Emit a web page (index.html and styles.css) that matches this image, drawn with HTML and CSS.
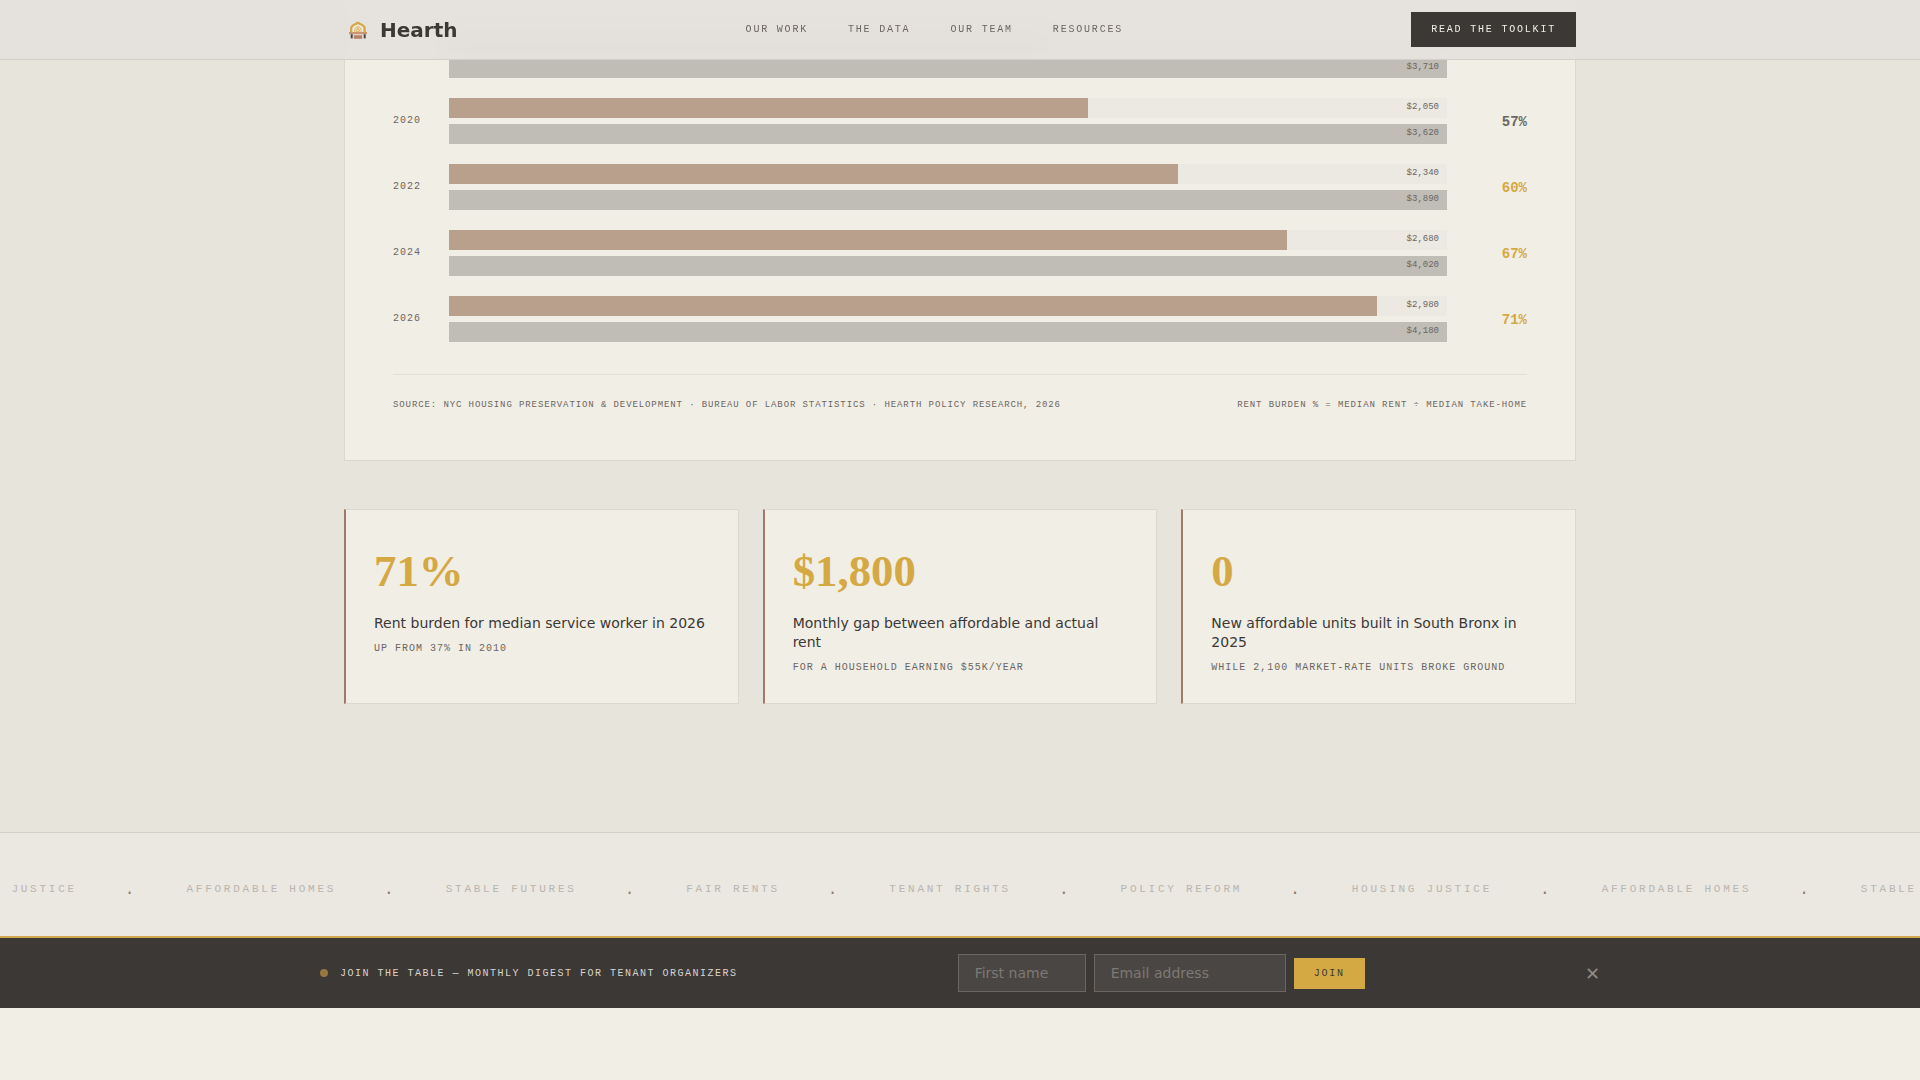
FILE: index.html
```html
<!DOCTYPE html>
<html lang="en">
<head>
<meta charset="utf-8">
<title>Hearth</title>
<link rel="stylesheet" href="styles.css">
</head>
<body>
<header class="site-header">
  <div class="header-inner">
    <a class="brand">
      <svg class="brand-mark" viewBox="0 0 28 28" width="28" height="28">
        <path d="M7.200 16.500v-5l1.300-1.700L13.900 6.700l5.400 3.100 1.300 1.700v5" fill="none" stroke="#d3a64a" stroke-width="2.200" stroke-linejoin="round"/>
        <path d="M8.800 16.200v-3.800q1-3.300 5.100-3.700 4.100.4 5.100 3.700v3.800z" fill="#f3ead6"/>
        <path d="M10.700 16.200v-2.700q.6-2.500 3.200-3 2.600.5 3.200 3v2.700" fill="none" stroke="#d9b566" stroke-width="1"/>
        <path d="M13.900 11.900q1.800 1.700 1.600 2.900-.4 1.400-1.600 1.400t-1.600-1.400q-.2-1.200 1.600-2.900z" fill="#ecd29a" stroke="#cf9f4c" stroke-width=".8"/>
        <rect x="5" y="16" width="18" height="2.200" fill="#c9946f"/>
        <rect x="6.700" y="18.200" width="2" height="4.200" fill="#4a4541"/>
        <rect x="19.700" y="18.200" width="2" height="4.200" fill="#4a4541"/>
        <rect x="9.800" y="19.200" width="8.400" height="3.600" fill="#b9826b"/>
      </svg>
      <span class="brand-name">Hearth</span>
    </a>
    <nav class="nav">
      <a>OUR WORK</a><a>THE DATA</a><a>OUR TEAM</a><a>RESOURCES</a>
    </nav>
    <a class="toolkit">READ THE TOOLKIT</a>
  </div>
</header>

<main class="data-section">
  <section class="chart-card">
    <div class="chart">
      <div class="chart-row">
        <span class="year"></span>
        <div class="bars">
          <div class="track"><div class="fill rent" style="width:60%"></div></div>
          <div class="track"><div class="fill income" style="width:100%"></div><span class="amount">$3,710</span></div>
        </div>
        <span class="burden"></span>
      </div>
      <div class="chart-row">
        <span class="year">2020</span>
        <div class="bars">
          <div class="track"><div class="fill rent" style="width:64%"></div><span class="amount">$2,050</span></div>
          <div class="track"><div class="fill income" style="width:100%"></div><span class="amount">$3,620</span></div>
        </div>
        <span class="burden">57%</span>
      </div>
      <div class="chart-row">
        <span class="year">2022</span>
        <div class="bars">
          <div class="track"><div class="fill rent" style="width:73%"></div><span class="amount">$2,340</span></div>
          <div class="track"><div class="fill income" style="width:100%"></div><span class="amount">$3,890</span></div>
        </div>
        <span class="burden high">60%</span>
      </div>
      <div class="chart-row">
        <span class="year">2024</span>
        <div class="bars">
          <div class="track"><div class="fill rent" style="width:84%"></div><span class="amount">$2,680</span></div>
          <div class="track"><div class="fill income" style="width:100%"></div><span class="amount">$4,020</span></div>
        </div>
        <span class="burden high">67%</span>
      </div>
      <div class="chart-row">
        <span class="year">2026</span>
        <div class="bars">
          <div class="track"><div class="fill rent" style="width:93%"></div><span class="amount">$2,980</span></div>
          <div class="track"><div class="fill income" style="width:100%"></div><span class="amount">$4,180</span></div>
        </div>
        <span class="burden high">71%</span>
      </div>
    </div>
    <div class="chart-notes">
      <span>SOURCE: NYC HOUSING PRESERVATION &amp; DEVELOPMENT · BUREAU OF LABOR STATISTICS · HEARTH POLICY RESEARCH, 2026</span>
      <span>RENT BURDEN % = MEDIAN RENT ÷ MEDIAN TAKE-HOME</span>
    </div>
  </section>

  <section class="stats">
    <article class="stat">
      <div class="stat-number">71%</div>
      <div class="stat-label">Rent burden for median service worker in 2026</div>
      <div class="stat-sub">UP FROM 37% IN 2010</div>
    </article>
    <article class="stat">
      <div class="stat-number">$1,800</div>
      <div class="stat-label">Monthly gap between affordable and actual rent</div>
      <div class="stat-sub">FOR A HOUSEHOLD EARNING $55K/YEAR</div>
    </article>
    <article class="stat">
      <div class="stat-number">0</div>
      <div class="stat-label">New affordable units built in South Bronx in 2025</div>
      <div class="stat-sub">WHILE 2,100 MARKET-RATE UNITS BROKE GROUND</div>
    </article>
  </section>
</main>

<div class="ticker">
  <div class="ticker-strip">
    <span>JUSTICE</span><i>·</i>
    <span>AFFORDABLE HOMES</span><i>·</i>
    <span>STABLE FUTURES</span><i>·</i>
    <span>FAIR RENTS</span><i>·</i>
    <span>TENANT RIGHTS</span><i>·</i>
    <span>POLICY REFORM</span><i>·</i>
    <span>HOUSING JUSTICE</span><i>·</i>
    <span>AFFORDABLE HOMES</span><i>·</i>
    <span>STABLE</span>
  </div>
</div>

<aside class="join-bar">
  <div class="join-inner">
    <div class="join-pitch"><span class="pulse"></span><span class="join-text">JOIN THE TABLE — MONTHLY DIGEST FOR TENANT ORGANIZERS</span></div>
    <form class="join-form">
      <input class="field field-name" type="text" placeholder="First name">
      <input class="field field-email" type="email" placeholder="Email address">
      <button class="join-button" type="button">JOIN</button>
    </form>
    <span class="dismiss">✕</span>
  </div>
</aside>
</body>
</html>
```
FILE: styles.css
```css
* { box-sizing: border-box; }

body {
  margin: 0;
  height: 1080px;
  overflow: hidden;
  background: #f1eee6;
  color: #3c3835;
  font-family: "DejaVu Sans", sans-serif;
}

.nav, .toolkit, .year, .amount, .burden, .chart-notes, .stat-sub,
.ticker, .join-pitch, .join-button {
  font-family: "Liberation Mono", monospace;
}

/* Header */
.site-header {
  position: sticky;
  top: 0;
  z-index: 2;
  height: 60px;
  border-bottom: 1px solid #d3cfc8;
  background: rgba(229, 226, 221, 0.95);
  backdrop-filter: blur(12px);
}
.header-inner {
  display: flex;
  align-items: center;
  justify-content: space-between;
  width: 1232px;
  height: 59px;
  margin: 0 auto;
}
.brand { display: flex; align-items: center; gap: 8px; }
.brand-mark { display: block; }
.brand-name { font-size: 20px; font-weight: 700; line-height: 24px; }
.nav { display: flex; gap: 40px; font-size: 10px; letter-spacing: 0.18em; line-height: 12px; color: #6b6661; }
.toolkit {
  padding: 12px 20px;
  background: #3c3835;
  color: #f1eee6;
  font-size: 10px;
  letter-spacing: 0.18em;
  line-height: 11px;
}

/* Chart */
.data-section {
  height: 832px;
  margin-top: -60px;
  background: #e7e4dc;
}
.chart-card {
  width: 1232px;
  height: 461px;
  margin: 0 auto;
  padding: 32px 48px 48px;
  border: 1px solid #dbd8d1;
  border-top: 0;
  background: #f1eee6;
}
.chart { display: grid; gap: 20px; }
.chart-row {
  display: grid;
  grid-template-columns: 40px 1fr 64px;
  column-gap: 16px;
  align-items: center;
  height: 46px;
}
.year { font-size: 10px; letter-spacing: 0.1em; line-height: 12px; color: #6b6661; }
.bars { display: grid; gap: 6px; }
.track { display: grid; height: 20px; background: #ece8e2; }
.fill { grid-area: 1 / 1; height: 20px; }
.rent { background: #b8a08d; }
.income { background: #c0bcb6; }
.amount {
  grid-area: 1 / 1;
  justify-self: end;
  padding: 4px 8px 0 0;
  font-size: 9px;
  line-height: 11px;
  color: #6b6661;
}
.burden { padding-top: 2px; font-size: 14px; font-weight: 700; line-height: 16px; text-align: right; color: #6b6661; }
.burden.high { color: #d4a843; }
.chart-notes {
  display: flex;
  justify-content: space-between;
  margin-top: 32px;
  padding-top: 25px;
  border-top: 1px solid #e2dfd9;
  font-size: 9px;
  letter-spacing: 0.1em;
  line-height: 11px;
  color: #6b6661;
}

/* Stats */
.stats {
  display: grid;
  grid-template-columns: repeat(3, 1fr);
  gap: 24px;
  width: 1232px;
  height: 195px;
  margin: 48px auto 0;
}
.stat {
  padding: 39px 28px 0;
  border: 1px solid #dbd8d1;
  border-left: 2px solid #a07a66;
  background: #f1eee6;
}
.stat-number {
  font: 700 44.8px/44px "Liberation Serif", serif;
  color: #d4a843;
}
.stat-label { margin-top: 21px; font-size: 14px; line-height: 19px; }
.stat-sub { margin-top: 10px; font-size: 10px; letter-spacing: 0.1em; line-height: 12px; color: #6b6661; }

/* Ticker */
.ticker {
  height: 104px;
  padding-top: 48px;
  overflow: hidden;
  border-top: 1px solid #d3cfc8;
  background: #ebe7e1;
}
.ticker-strip {
  display: flex;
  gap: 48px;
  width: max-content;
  padding-left: 11.4px;
  font-size: 11px;
  letter-spacing: 0.25em;
  line-height: 16px;
  color: #b9b5af;
}
.ticker-strip i {
  padding-top: 4px;
  font-size: 16px;
  font-style: normal;
  letter-spacing: 0.25em;
  line-height: 16px;
  color: #8f7a6f;
}

/* Newsletter bar */
.join-bar { border-top: 2px solid #d0a74c; background: #3c3835; }
.join-inner {
  display: flex;
  align-items: center;
  justify-content: space-between;
  width: 1280px;
  height: 70px;
  margin: 0 auto;
}
.join-pitch {
  display: flex;
  align-items: center;
  gap: 12px;
  font-size: 10px;
  letter-spacing: 0.15em;
  line-height: 12px;
  color: #d9d5cf;
}
.join-text { padding-top: 2px; }
.pulse { width: 8px; height: 8px; border-radius: 50%; background: #957941; }
.join-form { display: flex; align-items: center; gap: 8px; }
.field {
  height: 38px;
  padding: 0 16px;
  border: 1px solid #6b6661;
  border-radius: 0;
  background: #4a4643;
  color: #f1eee6;
  font: 14px "DejaVu Sans", sans-serif;
}
.field::placeholder { color: #7d7974; }
.field-name { width: 128px; }
.field-email { width: 192px; }
.join-button {
  padding: 10px 20px;
  border: 0;
  background: #d4a843;
  color: #3c3835;
  font-size: 10px;
  letter-spacing: 0.18em;
  line-height: 11px;
}
.dismiss { padding-top: 2px; font-size: 18px; line-height: 20px; color: #8e8a86; }
```
